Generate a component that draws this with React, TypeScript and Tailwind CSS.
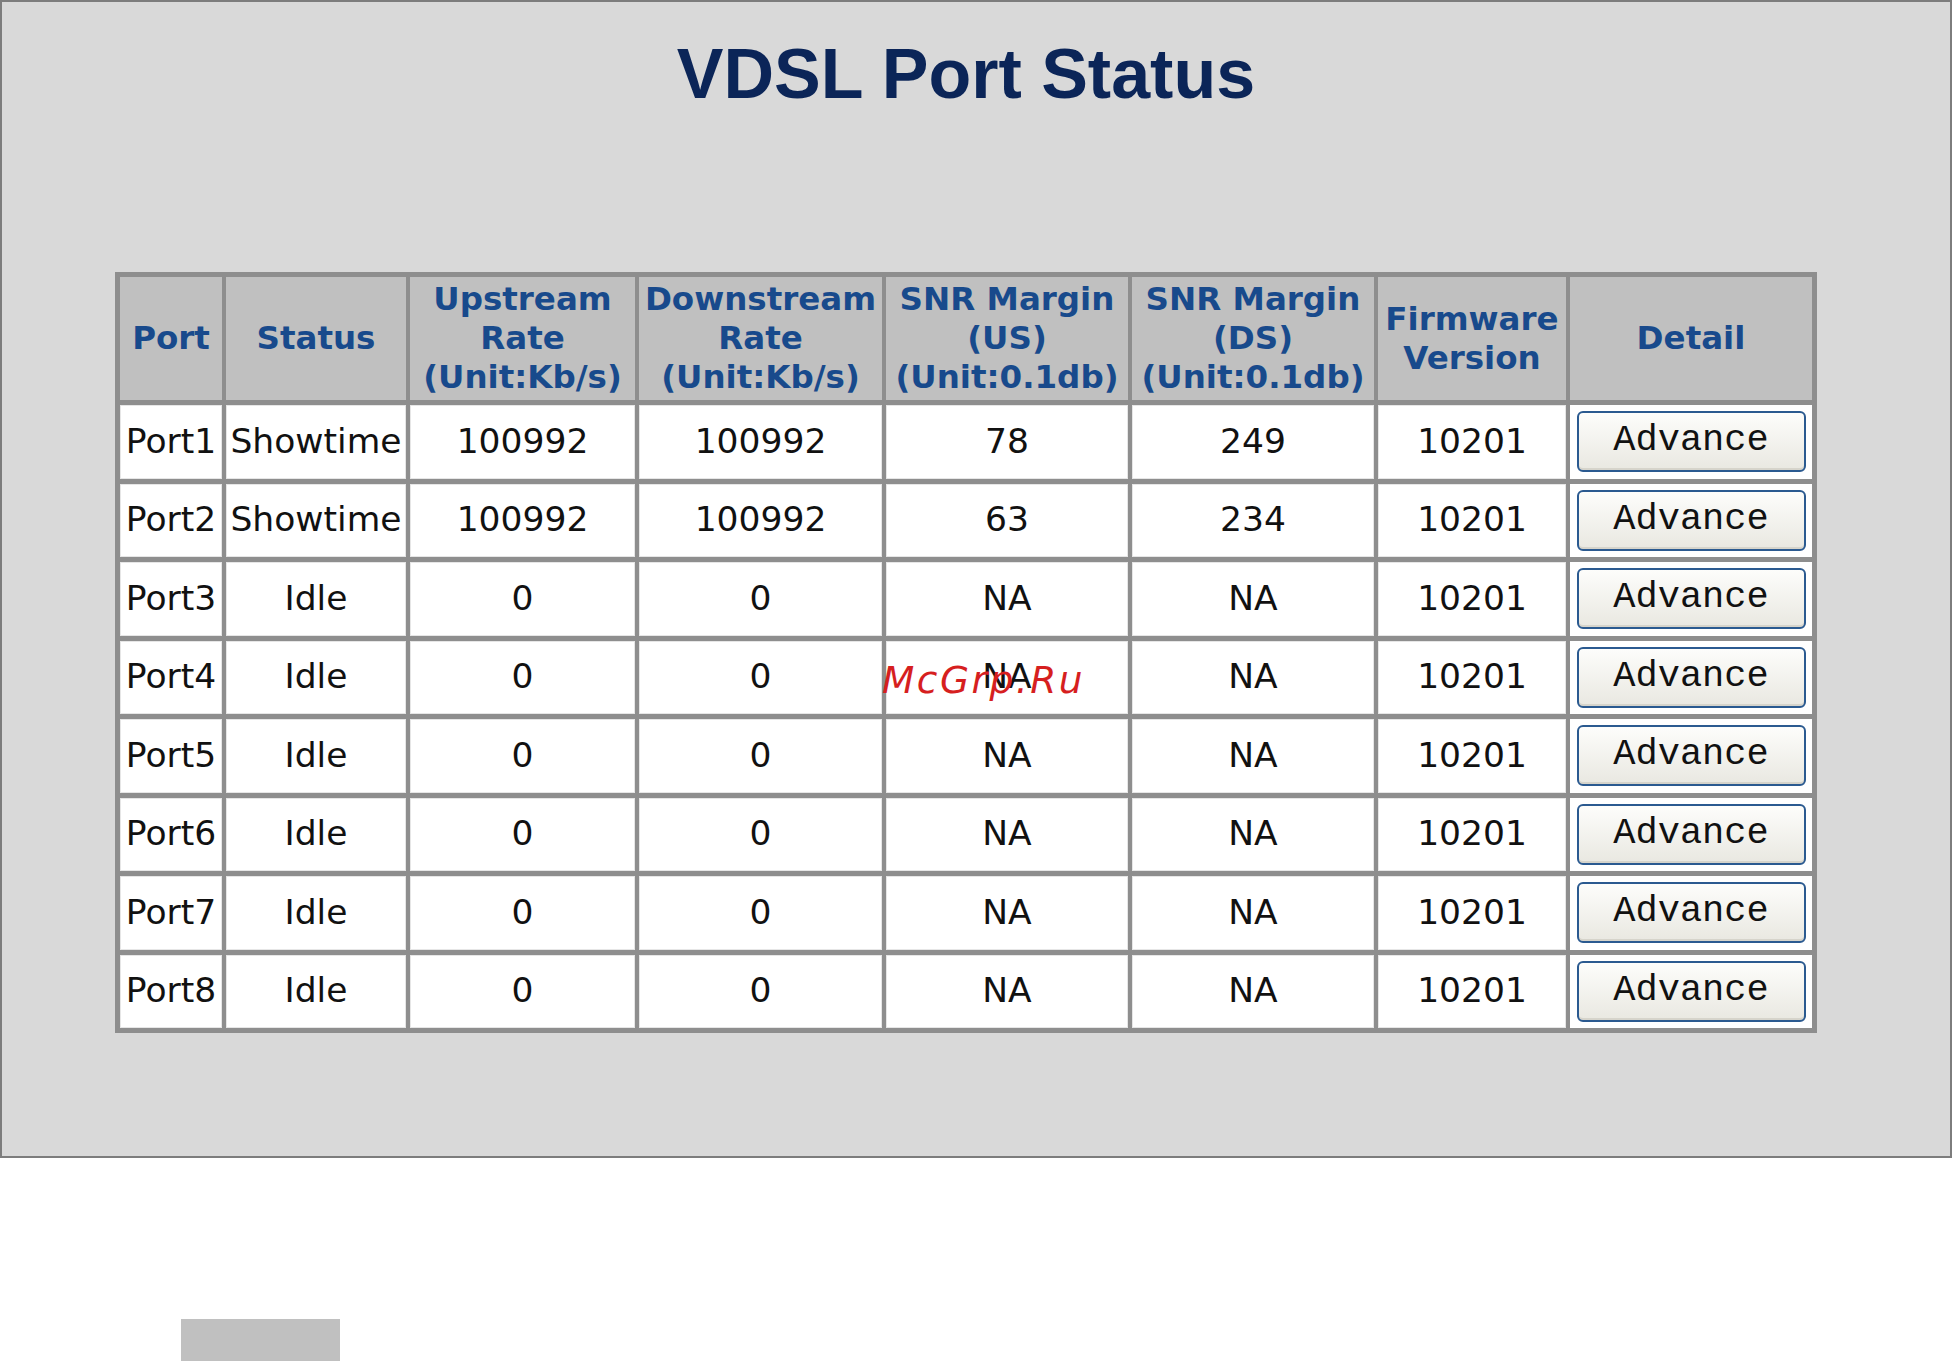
import React from 'react';

type PortRow = {
    port: string;
    status: string;
    up: string;
    down: string;
    snrUs: string;
    snrDs: string;
    fw: string;
};

const rows: PortRow[] = [
    { port: 'Port1', status: 'Showtime', up: '100992', down: '100992', snrUs: '78', snrDs: '249', fw: '10201' },
    { port: 'Port2', status: 'Showtime', up: '100992', down: '100992', snrUs: '63', snrDs: '234', fw: '10201' },
    { port: 'Port3', status: 'Idle', up: '0', down: '0', snrUs: 'NA', snrDs: 'NA', fw: '10201' },
    { port: 'Port4', status: 'Idle', up: '0', down: '0', snrUs: 'NA', snrDs: 'NA', fw: '10201' },
    { port: 'Port5', status: 'Idle', up: '0', down: '0', snrUs: 'NA', snrDs: 'NA', fw: '10201' },
    { port: 'Port6', status: 'Idle', up: '0', down: '0', snrUs: 'NA', snrDs: 'NA', fw: '10201' },
    { port: 'Port7', status: 'Idle', up: '0', down: '0', snrUs: 'NA', snrDs: 'NA', fw: '10201' },
    { port: 'Port8', status: 'Idle', up: '0', down: '0', snrUs: 'NA', snrDs: 'NA', fw: '10201' },
];

const headers: string[][] = [
    ['Port'],
    ['Status'],
    ['Upstream', 'Rate', '(Unit:Kb/s)'],
    ['Downstream', 'Rate', '(Unit:Kb/s)'],
    ['SNR Margin', '(US)', '(Unit:0.1db)'],
    ['SNR Margin', '(DS)', '(Unit:0.1db)'],
    ['Firmware', 'Version'],
    ['Detail'],
];

const HeadCell: React.FC<{ lines: string[] }> = ({ lines }) => (
    <div className="bg-[#c0c0c0] flex flex-col items-center justify-center text-center font-bold text-[32.5px] leading-[39px] text-[#184a8c] whitespace-nowrap">
        {lines.map((l, i) => (
            <span key={i}>{l}</span>
        ))}
    </div>
);

const Cell: React.FC<{ children: React.ReactNode }> = ({ children }) => (
    <div className="bg-white border border-[#e6e6e6] flex items-center justify-center text-[34.5px] text-[#111] whitespace-nowrap">
        {children}
    </div>
);

const AdvanceButton: React.FC = () => (
    <button
        type="button"
        className="w-[229px] h-[61px] rounded-[6px] border-2 border-[#2b5a90] bg-gradient-to-b from-[#fdfdfb] to-[#e9e8e1] text-[37px] leading-none text-[#111] pb-[2px] shadow-[inset_0_-2px_0_#d6d4cb]"
        style={{ fontFamily: '"Courier New", "Nimbus Mono PS", "Nimbus Mono L", FreeMono, "Liberation Mono", monospace' }}
    >
        Advance
    </button>
);

const App: React.FC = () => {
    return (
        <div className="relative min-h-[1361px] bg-white" style={{ fontFamily: '"DejaVu Sans", Verdana, sans-serif' }}>
            <div className="w-[1952px] h-[1158px] border-2 border-[#7d7d7d] bg-[#d9d9d9]">
                <div className="w-[1928px]">
                    <h1
                        className="pt-[37px] text-center text-[70px] leading-none font-bold text-[#0b2558]"
                        style={{ fontFamily: '"Liberation Sans", Arial, sans-serif' }}
                    >
                        VDSL Port Status
                    </h1>

                    <div className="mt-[163px] mx-auto w-fit grid grid-cols-[102px_180px_225px_243px_242px_242px_188px_242px] grid-rows-[123px_repeat(8,73.5px)] gap-x-[4px] gap-y-[5px] p-[5px] bg-[#8e8e8e]">
                        {headers.map((h, i) => (
                            <HeadCell key={i} lines={h} />
                        ))}
                        {rows.map((r) => (
                            <React.Fragment key={r.port}>
                                <Cell>{r.port}</Cell>
                                <Cell>{r.status}</Cell>
                                <Cell>{r.up}</Cell>
                                <Cell>{r.down}</Cell>
                                <Cell>{r.snrUs}</Cell>
                                <Cell>{r.snrDs}</Cell>
                                <Cell>{r.fw}</Cell>
                                <div className="bg-white flex items-center justify-center">
                                    <AdvanceButton />
                                </div>
                            </React.Fragment>
                        ))}
                    </div>
                </div>
            </div>

            <div className="mt-[161px] ml-[181px] w-[159px] h-[42px] bg-[#c0c0c0]" />

            {/* watermark sitting over the table */}
            <span className="absolute left-[882px] top-[662px] text-[37.5px] leading-none italic tracking-[2.5px] text-[#d61f1f]">
                McGrp.Ru
            </span>
        </div>
    );
};

export default App;
